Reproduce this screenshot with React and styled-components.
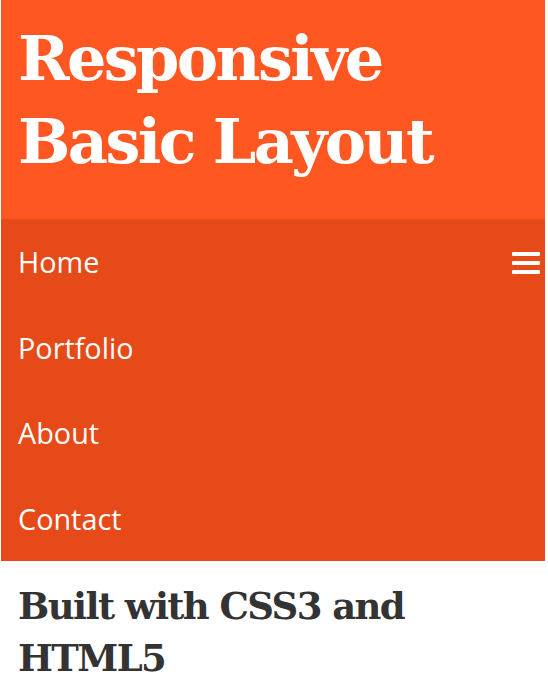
import React from 'react'
import styled, { createGlobalStyle } from 'styled-components'

//
// Colours and sizes
//
const vars = {
  orange: '#FF5722',
  darkOrange: '#E64A19',
  text: '#333333',
  navHeight: '85.5px'
}

const GlobalStyle = createGlobalStyle`
  html, body {
    margin: 0;
    padding: 0;
    background: #FFFFFF;
  }
  body {
    padding: 0 3px 0 1px;
    font-family: "Open Sans", "DejaVu Sans", sans-serif;
  }
`

const Header = styled.header`
  background-color: ${vars.orange};
  height: 219px;
  box-sizing: border-box;
  padding: 17px 17px 0;
`

const Title = styled.h1`
  margin: 0;
  font-family: "DejaVu Serif", "Liberation Serif", serif;
  font-weight: 700;
  font-size: 62px;
  line-height: 83px;
  letter-spacing: -2.6px;
  color: #FFFFFF;
`

const Nav = styled.nav`
  background-color: ${vars.darkOrange};
  position: relative;
`

const Menu = styled.ul`
  list-style: none;
  margin: 0;
  padding: 0;
`

const MenuItem = styled.li`
  height: ${vars.navHeight};
  display: flex;
  align-items: center;
  padding-left: 17px;
  font-size: 28.8px;
  color: #FFFFFF;
`

const Toggle = styled.span`
  position: absolute;
  top: 33px;
  right: 5px;
  width: 28px;
  display: flex;
  flex-direction: column;
  gap: 5px;

  & > i {
    display: block;
    height: 4px;
    border-radius: 1px;
    background: #FFFFFF;
  }
`

const Main = styled.main`
  padding: 19px 17px 0;
`

const Heading = styled.h2`
  margin: 0;
  font-family: "DejaVu Serif", "Liberation Serif", serif;
  font-weight: 700;
  font-size: 37px;
  line-height: 52px;
  letter-spacing: -1.6px;
  color: ${vars.text};
`

const links = ['Home', 'Portfolio', 'About', 'Contact']

export default function App () {
  return (
    <>
      <GlobalStyle />
      <Header>
        <Title>Responsive<br />Basic Layout</Title>
      </Header>
      <Nav>
        <Menu>
          {links.map(label => <MenuItem key={label}>{label}</MenuItem>)}
        </Menu>
        <Toggle><i /><i /><i /></Toggle>
      </Nav>
      <Main>
        <Heading>Built with CSS3 and HTML5</Heading>
      </Main>
    </>
  )
}
